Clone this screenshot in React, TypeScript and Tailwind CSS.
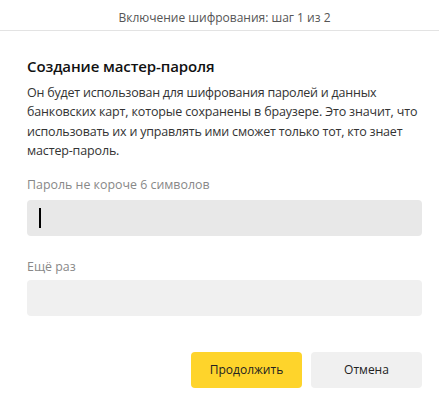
export default function App() {
  const font = { fontFamily: '"Open Sans", "Noto Sans", sans-serif' };
  return (
    <div className="w-[439px] h-[402px] bg-white overflow-hidden" style={font}>
      <div className="w-[449px] text-[#222]">
        <div className="h-[31px] border-b border-[#e3e3e3] flex items-center justify-center text-[12px] text-[#555] pt-[5px]">
          Включение шифрования: шаг 1 из 2
        </div>
        <div className="px-[27px] pt-[23px]">
          <h1 className="text-[15px] font-semibold text-[#111] leading-[24px] tracking-[-0.1px]">Создание мастер-пароля</h1>
          <p className="mt-[5px] text-[12.5px] leading-[19.3px] text-[#333] whitespace-nowrap tracking-[-0.15px]">
            <span className="block tracking-[-0.22px]">Он будет использован для шифрования паролей и данных</span>
            <span className="block">банковских карт, которые сохранены в браузере. Это значит, что</span>
            <span className="block tracking-[-0.2px]">использовать их и управлять ими сможет только тот, кто знает</span>
            <span className="block">мастер-пароль.</span>
          </p>
          <div className="mt-[15px] text-[12.4px] leading-[20px] text-[#888]">Пароль не короче 6 символов</div>
          <div className="mt-[5px] h-[36px] rounded-[4px] bg-[#e8e8e8] flex items-center pl-[12px]">
            <span className="block w-[1.5px] h-[20px] bg-black" />
          </div>
          <div className="mt-[21px] text-[12.4px] leading-[20px] text-[#888]">Ещё раз</div>
          <div className="mt-[3px] h-[36px] rounded-[4px] bg-[#f0f0f0]" />
          <div className="mt-[36px] flex justify-end gap-[9px]">
            <button className="w-[111px] h-[36px] rounded-[4px] bg-[#fed42b] text-[12px] text-[#222]">Продолжить</button>
            <button className="w-[111px] h-[36px] rounded-[4px] bg-[#f0f0f0] text-[12px] text-[#222]">Отмена</button>
          </div>
        </div>
      </div>
    </div>
  );
}
